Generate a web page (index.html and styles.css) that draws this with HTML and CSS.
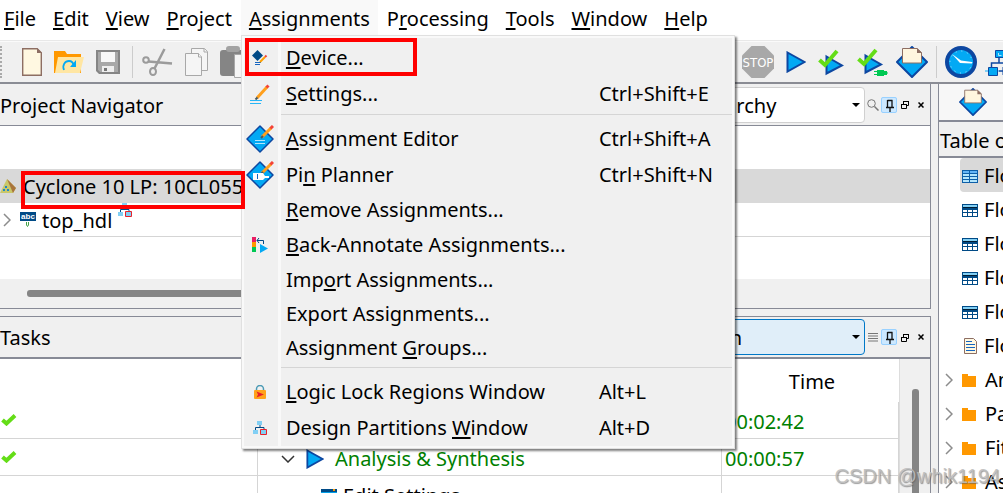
FILE: index.html
```
<!DOCTYPE html>
<html lang="en">
<head>
    <meta charset="UTF-8">
    <meta name="viewport" content="width=device-width, initial-scale=1.0">
    <title>Quartus Prime</title>
    <link rel="stylesheet" href="styles.css">
</head>
<body>
    <!-- shared icons -->
    <svg class="defs" width="0" height="0">
        <symbol id="play" viewBox="0 0 20 22"><path d="M1.500 1.500L18.500 11L1.500 20.500z" fill="#03a9f4" stroke="#0d47a1" stroke-width="2"/></symbol>
        <symbol id="paper-diamond" viewBox="0 0 32 32">
            <path d="M16 1L31 16L16 31L1 16z" fill="#03a9f4" stroke="#0d47a1" stroke-width="2" stroke-linejoin="round"/>
            <path d="M6.500 2.500H21l4.500 4V17h-19z" fill="#fff6df" stroke="#8d6e63"/><path d="M21 2v5h5z" fill="#8d6e63"/>
        </symbol>
        <symbol id="edit-diamond" viewBox="0 0 28 28">
            <path d="M14 1L27 14L14 27L1 14z" fill="#03a9f4" stroke="#0d47a1" stroke-width="1.500" stroke-linejoin="round"/>
            <path d="M16 12L25 3" stroke="#ff9f1c" stroke-width="3"/><path d="M24.500 3.500L27 1" stroke="#f44336" stroke-width="3"/><path d="M15 13l2-2" stroke="#455a64" stroke-width="2"/>
        </symbol>
        <symbol id="table" viewBox="0 0 16 13">
            <path d="M0 0h16v13H0z" fill="#004a86"/><path d="M1 1h14v2H1z" fill="#81cff4"/><path d="M1 3h14v1H1z" fill="#001c33"/>
            <path d="M1 6h4v2H1zM6 6h4v2H6zM11 6h4v2h-4zM1 9h4v3H1zM6 9h4v3H6zM11 9h4v3h-4z" fill="#fff"/>
        </symbol>
        <symbol id="folder" viewBox="0 0 14 13"><path d="M0 0h6v2h8v11H0z" fill="#ff9800"/></symbol>
        <symbol id="chevron" viewBox="0 0 8 14"><path d="M1 1l6 6-6 6" fill="none" stroke="#8c8c8c" stroke-width="1.500"/></symbol>
        <symbol id="tick" viewBox="0 0 16 12"><path d="M1.500 6l4 3.500L14 1.500" fill="none" stroke="#64dd17" stroke-width="4"/></symbol>
        <symbol id="partition" viewBox="0 0 14 14">
            <path d="M7 4v3M2.500 10V6.500H11V10" fill="none" stroke="#004a86"/><path d="M4 0h5v4H4zM0 9h5v4H0z" fill="#81cff4"/><path d="M7.500 8.500h6v5h-6z" fill="#81cff4" stroke="#e8202a"/>
        </symbol>
        <symbol id="pin" viewBox="0 0 16 16"><path d="M6.500 3v7M5 10.500h8M6.500 3.500h5M11 3v7M9 11v4" fill="none" stroke="#111" stroke-width="1.300"/></symbol>
        <symbol id="float" viewBox="0 0 8 9"><path d="M.5 4.500h5v4h-5zM2.500 4V1.500h5v4H6M2 1.500h6M0 4.500h6" fill="none" stroke="#000"/></symbol>
        <symbol id="close" viewBox="0 0 6 6"><path d="M.5.5l5 5M5.500.5l-5 5" stroke="#000" stroke-width="1.500"/></symbol>
    </svg>

    <nav class="menubar">
        <div class="menu"><button><u>F</u>ile</button></div>
        <div class="menu"><button><u>E</u>dit</button></div>
        <div class="menu"><button><u>V</u>iew</button></div>
        <div class="menu"><button><u>P</u>roject</button></div>
        <div class="menu open">
            <button><u>A</u>ssignments</button>
            <div class="dropdown">
                <button class="item with-icon marked">
                    <span class="icon"><svg width="16" height="16" viewBox="0 0 16 16"><path d="M5.500 0l5.500 5.500L5.500 11 0 5.500z" fill="#004a86"/><path d="M3 12.500h6M3 14.500h5" stroke="#1565c0"/><path d="M8 12l5-5" stroke="#ffa000" stroke-width="2"/><path d="M13 7l1.500-1.500" stroke="#f44336" stroke-width="2"/></svg></span>
                    <span><u>D</u>evice...</span>
                </button>
                <button class="item with-icon">
                    <span class="icon"><svg width="20" height="20" viewBox="0 0 20 20"><path d="M7 14L17 3" stroke="#ff9f1c" stroke-width="3"/><path d="M16.500 3.500l2-2" stroke="#f44336" stroke-width="3"/><path d="M5.500 15.500l2-2" stroke="#455a64" stroke-width="2"/><path d="M0 16.500h12M0 19.500h11" stroke="#29b6f6"/></svg></span>
                    <span><u>S</u>ettings...</span><span>Ctrl+Shift+E</span>
                </button>
                <hr>
                <button class="item with-icon">
                    <span class="icon"><svg width="28" height="28"><use href="#edit-diamond"/><path d="M9 15.500h10M9 18.500h10" stroke="#b3e5fc"/></svg></span>
                    <span><u>A</u>ssignment Editor</span><span>Ctrl+Shift+A</span>
                </button>
                <button class="item with-icon">
                    <span class="icon"><svg width="28" height="28"><use href="#edit-diamond"/><path d="M7 12h10l2 3h4v2h-4l-2 2H7z" fill="#fff"/><path d="M11.500 13v5" stroke="#1565c0"/></svg></span>
                    <span>Pi<u>n</u> Planner</span><span>Ctrl+Shift+N</span>
                </button>
                <button class="item"><span class="icon"></span><span><u>R</u>emove Assignments...</span></button>
                <button class="item with-icon">
                    <span class="icon"><svg width="16" height="16" viewBox="0 0 16 16"><path d="M0 0h4v5H0z" fill="#e91e63"/><path d="M0 5h4v5H0z" fill="#ff9800"/><path d="M0 10h4v5H0z" fill="#00c853"/><path d="M5 3.500h6.500V7M7 1L5 3.500 7 6" fill="none" stroke="#004a86"/><path d="M8 7l8 4.500L8 16z" fill="#03a9f4"/></svg></span>
                    <span><u>B</u>ack-Annotate Assignments...</span>
                </button>
                <button class="item"><span class="icon"></span><span>Imp<u>o</u>rt Assignments...</span></button>
                <button class="item"><span class="icon"></span><span>Export Assignments...</span></button>
                <button class="item"><span class="icon"></span><span>Assignment <u>G</u>roups...</span></button>
                <hr>
                <button class="item with-icon">
                    <span class="icon"><svg width="12" height="15" viewBox="0 0 12 15"><path d="M2.500 6V4a3.500 3.500 0 0 1 7 0v2" fill="none" stroke="#4b9ab5" stroke-width="1.500"/><rect y="5" width="12" height="9" rx="1" fill="#ffa31a"/><path d="M2.500 6.500l7.500 3-7.500 3 1.500-3z" fill="#e8202a"/></svg></span>
                    <span><u>L</u>ogic Lock Regions Window</span><span>Alt+L</span>
                </button>
                <button class="item with-icon">
                    <span class="icon"><svg width="14" height="14"><use href="#partition"/></svg></span>
                    <span>Design Partitions <u>W</u>indow</span><span>Alt+D</span>
                </button>
            </div>
        </div>
        <div class="menu"><button>P<u>r</u>ocessing</button></div>
        <div class="menu"><button><u>T</u>ools</button></div>
        <div class="menu"><button><u>W</u>indow</button></div>
        <div class="menu"><button><u>H</u>elp</button></div>
    </nav>

    <div class="toolbar">
        <span class="grip"></span>
        <div class="tools file-tools">
            <button aria-label="New"><svg width="20" height="28" viewBox="0 0 20 28"><path d="M.7.7h14.500l4.100 4V27.300H.7z" fill="#fff8e1" stroke="#8d6e63" stroke-width="1.400"/><path d="M15 0v5h5z" fill="#8d6e63"/></svg></button>
            <button aria-label="Open"><svg width="30" height="22" viewBox="0 0 30 22"><path d="M0 0h11l2 3h14v19H0z" fill="#ff9800"/><path d="M4 6h26l-4 16H1z" fill="#ffe6a3"/><path d="M10 19c-2-5 1-9 5-9q4 0 5 5" fill="none" stroke="#03a9f4" stroke-width="1.800"/><path d="M16 16h6V9z" fill="#03a9f4"/></svg></button>
            <button aria-label="Save"><svg width="24" height="24" viewBox="0 0 24 24"><path d="M0 0h24v24H3l-3-3z" fill="#858585"/><path d="M1.500 1.500h21v21H4l-2.500-2.500z" fill="#a8a8a8" stroke="#858585"/><path d="M5 2h14v10H5z" fill="#f7f7f7"/><path d="M6 16h12v6H6z" fill="#eee"/><path d="M8 18h3v3H8z" fill="#777"/></svg></button>
            <span class="divider"></span>
        </div>
        <div class="tools edit-tools">
            <button aria-label="Cut"><svg width="31" height="28" viewBox="0 0 31 28" fill="none" stroke="#9b9b9b"><circle cx="4" cy="12" r="2.800" stroke-width="2"/><ellipse cx="11" cy="23.500" rx="3" ry="3.500" stroke-width="2"/><path d="M6.500 13.500L30 15.500M12.500 20.500L22.500 1" stroke-width="2.500"/></svg></button>
            <button aria-label="Copy"><svg width="23" height="28" viewBox="0 0 23 28" fill="#f5f5f5" stroke="#a8a8a8"><path d="M6.500.5h13l3 3v19h-16z"/><path d="M.5 5.500h13l3 3v19H.5z"/><path d="M13.500 5.500v3.500h3.500M19 .5v3.500h3.500"/></svg></button>
            <button aria-label="Paste"><svg width="30" height="32" viewBox="0 0 30 32"><rect y="4" width="26" height="26" rx="3" fill="#858585"/><rect x="6" width="14" height="6" rx="3" fill="#a3a3a3"/><path d="M14.500 8.500h14v23h-14z" fill="#f5f5f5" stroke="#a8a8a8"/></svg></button>
        </div>
        <div class="tools start-tools">
            <button aria-label="Stop"><svg width="32" height="32" viewBox="0 0 32 32"><path d="M9.500 0h13L32 9.500v13L22.500 32h-13L0 22.500v-13z" fill="#a8a8a8"/><text x="16" y="21" text-anchor="middle" class="stop-text">STOP</text></svg></button>
            <button aria-label="Start compilation"><svg width="20" height="22"><use href="#play"/></svg></button>
            <button aria-label="Analyze"><svg width="26" height="27" viewBox="0 0 26 27"><path d="M8.500 7.500L24 16.500l-15.500 8z" fill="#03a9f4" stroke="#0d47a1" stroke-width="2"/><path d="M1.500 11l5.500 5L19 2" fill="none" stroke="#64dd17" stroke-width="4"/></svg></button>
            <button aria-label="Analyze and elaborate"><svg width="32" height="29" viewBox="0 0 32 29"><path d="M9.500 7.500L25 16.500l-15.500 8z" fill="#03a9f4" stroke="#0d47a1" stroke-width="2"/><path d="M2.500 11l5.500 5L20 2" fill="none" stroke="#64dd17" stroke-width="4"/><path d="M21 22h7v1h3v4h-3v1h-7z" fill="#00c853"/><path d="M18 23.500h4M18 26.500h4M30 25h2" stroke="#00c853"/></svg></button>
        </div>
        <div class="tools report-tools">
            <button aria-label="Compilation report"><svg width="32" height="32"><use href="#paper-diamond"/></svg></button>
            <span class="divider"></span>
            <button aria-label="Timing analyzer"><svg width="32" height="32" viewBox="0 0 32 32"><circle cx="16" cy="16" r="14" fill="#03a9f4" stroke="#0d47a1" stroke-width="4"/><circle cx="16" cy="16" r="11" fill="none" stroke="#b3e5fc" stroke-dasharray="1 4.760"/><path d="M7 8l9 6.500 11 1.500v1.500l-12-.5z" fill="#fff"/></svg></button>
            <button aria-label="Netlist viewer"><svg width="18" height="27" viewBox="0 0 18 27"><path d="M14 8v6M6.500 18v-4H18M0 22h18" fill="none" stroke="#0d47a1" stroke-width="1.500"/><path d="M0 22h3M12 22h2" stroke="#81cff4" stroke-width="2"/><path d="M10.500 1.500h9v7h-9zM3.500 18.500h9v8h-9zM18 18h2v8h-2z" fill="#03a9f4" stroke="#0d47a1"/><path d="M13.500 4v2.500h3" fill="none" stroke="#b3e5fc"/></svg></button>
        </div>
    </div>

    <main class="workspace">
        <div class="left">
            <section class="panel navigator">
                <header class="panel-head">
                    <h2>Project Navigator</h2>
                    <span class="select-wrap"><select class="hierarchy" aria-label="View"><option>Hierarchy</option></select></span>
                    <button aria-label="Search"><svg width="12" height="12" viewBox="0 0 12 12" fill="none" stroke="#777"><circle cx="4.500" cy="4.500" r="3.800"/><path d="M7.500 7.500l4 4" stroke-width="1.500"/></svg></button>
                    <button class="pin" aria-label="Pin"><svg width="16" height="16"><use href="#pin"/></svg></button>
                    <button aria-label="Float"><svg width="8" height="9"><use href="#float"/></svg></button>
                    <button aria-label="Close"><svg width="6" height="6"><use href="#close"/></svg></button>
                </header>
                <div class="tree">
                    <div class="tree-row selected">
                        <svg width="16" height="14" viewBox="0 0 16 14"><path d="M7 0l9 9-3 5H0z" fill="#c9c76a"/><path d="M7 0l9 9-3 5z" fill="#a9743c"/><path d="M5 7h2v2H5zM3 10h2v2H3zM7 10h2v2H7z" fill="#1e88c8"/></svg>
                        <span>Cyclone 10 LP: 10CL055</span>
                        <span class="mark"></span>
                    </div>
                    <div class="tree-row entity">
                        <svg class="arrow" width="8" height="14"><use href="#chevron"/></svg>
                        <svg width="16" height="15" viewBox="0 0 16 15"><path d="M0 0h16v9H0z" fill="#004a86"/><text x="8" y="7" text-anchor="middle" class="abc-text">abc</text><path d="M6.500 10v3l1 1.500 1-1.500v-3" fill="none" stroke="#43a047"/></svg>
                        <span>top_hdl</span>
                        <svg class="part" width="14" height="14"><use href="#partition"/></svg>
                    </div>
                </div>
                <div class="hscroll"><span></span></div>
            </section>

            <section class="panel tasks">
                <header class="panel-head">
                    <h2>Tasks</h2>
                    <span class="select-wrap"><select class="flow" aria-label="Flow"><option>Compilation</option></select></span>
                    <button aria-label="Menu"><svg width="10" height="10" viewBox="0 0 10 10"><path d="M0 1.500h10M0 4h10M0 6.500h10M0 9h10" stroke="#777"/></svg></button>
                    <button class="pin" aria-label="Pin"><svg width="16" height="16"><use href="#pin"/></svg></button>
                    <button aria-label="Float"><svg width="8" height="9"><use href="#float"/></svg></button>
                    <button aria-label="Close"><svg width="6" height="6"><use href="#close"/></svg></button>
                </header>
                <div class="task-body">
                    <table>
                        <colgroup><col class="c-status"><col><col class="c-time"></colgroup>
                        <thead><tr><th></th><th></th><th>Time</th></tr></thead>
                        <tbody>
                            <tr><td><svg width="16" height="12"><use href="#tick"/></svg></td><td></td><td>00:02:42</td></tr>
                            <tr>
                                <td><svg width="16" height="12"><use href="#tick"/></svg></td>
                                <td><div class="task level-1"><svg width="14" height="8" viewBox="0 0 14 8"><path d="M1 1l6 6 6-6" fill="none" stroke="#333" stroke-width="1.500"/></svg><svg width="18" height="20"><use href="#play"/></svg>Analysis &amp; Synthesis</div></td>
                                <td>00:00:57</td>
                            </tr>
                            <tr>
                                <td></td>
                                <td><div class="task level-2"><svg width="16" height="14" viewBox="0 0 16 14"><path d="M0 0h16v14H0z" fill="#03a0e8"/><path d="M0 0h16v3H0z" fill="#004a86"/><path d="M12 0h2v2h-2z" fill="#ff9800"/></svg>Edit Settings</div></td>
                                <td></td>
                            </tr>
                        </tbody>
                    </table>
                    <div class="vscroll"><span></span></div>
                </div>
            </section>
        </div>

        <aside class="report">
            <div class="tab"><svg width="28" height="28"><use href="#paper-diamond"/></svg></div>
            <h2>Table of Contents</h2>
            <ul>
                <li class="selected"><svg width="16" height="13" viewBox="0 0 16 13"><path d="M0 0h16v13H0z" fill="#0d5fa8"/><path d="M1 1h6v2H1zM8 1h7v2H8z" fill="#64b5f6"/><path d="M1 4h6v2H1zM8 4h7v2H8zM1 7h6v2H1zM8 7h7v2H8zM1 10h6v2H1zM8 10h7v2H8z" fill="#b3e5fc"/></svg>Flow Summary</li>
                <li><svg width="16" height="13"><use href="#table"/></svg>Flow Settings</li>
                <li><svg width="16" height="13"><use href="#table"/></svg>Flow Non-Default Global Settings</li>
                <li><svg width="16" height="13"><use href="#table"/></svg>Flow Elapsed Time</li>
                <li><svg width="16" height="13"><use href="#table"/></svg>Flow OS Summary</li>
                <li><svg width="16" height="16" viewBox="0 0 16 16"><path d="M2.500.5h9l3 3v12h-12z" fill="#fff8e1" stroke="#8d6e63"/><path d="M4 3.500h6M4 6.500h9M4 9.500h9M4 12.500h9" stroke="#1565c0"/></svg>Flow Log</li>
                <li class="branch"><svg width="8" height="14"><use href="#chevron"/></svg><svg width="16" height="13"><use href="#folder"/></svg>Analysis &amp; Synthesis</li>
                <li class="branch"><svg width="8" height="14"><use href="#chevron"/></svg><svg width="16" height="13"><use href="#folder"/></svg>Partition Merge</li>
                <li class="branch"><svg width="8" height="14"><use href="#chevron"/></svg><svg width="16" height="13"><use href="#folder"/></svg>Fitter</li>
                <li class="branch"><svg width="8" height="14"><use href="#chevron"/></svg><svg width="16" height="13"><use href="#folder"/></svg>Assembler</li>
            </ul>
        </aside>
    </main>
    <div class="watermark">CSDN @whik1194</div>
</body>
</html>
```
FILE: styles.css
```
* {
    box-sizing: border-box;
}
body {
    margin: 0;
    height: 100vh;
    overflow: hidden;
    position: relative;
    display: flex;
    flex-direction: column;
    background: #f0f0f0;
    color: #000;
    font-family: "Noto Sans", sans-serif;
    font-size: 20px;
    line-height: 28px;
    white-space: nowrap;
}
button {
    padding: 0;
    border: 0;
    background: none;
    color: inherit;
    font: inherit;
}
svg {
    display: block;
    flex: none;
}
.defs {
    position: absolute;
}
u {
    text-decoration-thickness: 2px;
    text-underline-offset: 2px;
    text-decoration-skip-ink: none;
}
h2 {
    margin: 0;
    font-size: 20px;
    font-weight: normal;
}

/* menu bar */
.menubar {
    display: flex;
    flex: none;
    gap: 1px;
    height: 41px;
    padding-right: 8px;
    padding-left: 4px;
    margin-left: -8px;
    background: #fff;
    border-bottom: 1px solid #e8e8e8;
}
.menu {
    position: relative;
    height: 36px;
}
.menu > button {
    height: 36px;
    padding: 2px 8px 0;
}
.menu.open {
    background: #f9f9f9;
}
.dropdown {
    position: absolute;
    z-index: 10;
    top: 35px;
    left: 0;
    width: 494px;
    padding: 4px 2px 2px;
    border: 1px solid #e0e0e0;
    background: #f9f9f9;
    background: linear-gradient(#f0f0f0, #f0f0f0) 2px 2px / 488px 10px no-repeat #f9f9f9;
    box-shadow: 2px 2px 2px rgba(0, 0, 0, 0.5);
}
.item {
    position: relative;
    display: grid;
    grid-template-columns: 42px 1fr 133px;
    align-items: center;
    width: 100%;
    height: 34px;
    background: #f0f0f0;
    text-align: left;
}
.item.with-icon {
    height: 36px;
}
.item .icon {
    display: flex;
    align-items: center;
    justify-content: center;
    width: 37px;
    height: 100%;
    padding-right: 2px;
    border-right: 3px solid #f9f9f9;
}
.dropdown hr {
    height: 9px;
    margin: 0;
    border: 0;
    background: linear-gradient(#d5d5d5, #d5d5d5) 37px 2px / 100% 1px no-repeat, linear-gradient(90deg, #f0f0f0 34px, #f9f9f9 34px 37px, #f0f0f0 37px);
}
.item.marked::after {
    content: "";
    position: absolute;
    z-index: 1;
    box-sizing: border-box;
    top: -2px;
    left: 1px;
    width: 172px;
    height: 38px;
    border: 4px solid #f00;
}

/* toolbar */
.toolbar {
    display: flex;
    flex: none;
    align-items: center;
    height: 43px;
    border-top: 1px solid #fafafa;
    border-bottom: 2px solid #8a8c94;
}
.grip {
    width: 2px;
    height: 32px;
    border-right: 2px dotted #aaa;
}
.tools {
    display: flex;
    align-items: center;
    gap: 12px;
}
.file-tools {
    margin-left: 20px;
}
.edit-tools {
    margin-left: 9px;
}
.start-tools {
    margin-left: auto;
}
.report-tools {
    gap: 8px;
    margin-left: 8px;
}
.divider {
    width: 1px;
    height: 32px;
    background: #ccc;
}
.stop-text {
    font: 14px "Liberation Sans Narrow", "DejaVu Sans Condensed", sans-serif;
    font-size: 13px;
    fill: #fff;
}
.abc-text {
    font: bold 8px "Liberation Sans", sans-serif;
    fill: #fff;
}

/* docked panels */
.workspace {
    display: grid;
    grid-template-columns: minmax(0, 1fr) 65px;
    gap: 7px;
    flex: 1;
    min-height: 0;
}
.left {
    display: flex;
    flex-direction: column;
    gap: 7px;
    min-height: 0;
}
.panel {
    border-right: 1px solid #878a96;
}
.navigator {
    border-bottom: 1px solid #878a96;
}
.panel-head {
    display: flex;
    align-items: center;
    height: 42px;
    padding-right: 1px;
    border-bottom: 1px solid #878a96;
}
.panel-head h2 {
    flex: 1;
    padding-top: 2px;
}
.select-wrap {
    position: relative;
    display: flex;
}
.select-wrap::after {
    content: "";
    position: absolute;
    right: 5px;
    top: 16px;
    border: 4px solid transparent;
    border-top-color: #000;
    border-bottom: 0;
}
select {
    appearance: none;
    height: 36px;
    padding: 2px 8px 0;
    border: 1px solid #d0d0d0;
    border-radius: 4px;
    background: #fff;
    color: #000;
    font: inherit;
}
.hierarchy {
    width: 188px;
}
.flow {
    width: 246px;
    border-color: #0078c8;
    background: #e0eef9;
}
.panel-head button {
    display: flex;
    align-items: center;
    justify-content: center;
    width: 16px;
    height: 16px;
}
.panel-head .pin {
    border-radius: 2px;
    outline: 1px solid #99d1ff;
    outline-offset: -1px;
    background: #cce8ff;
}
.tree {
    height: 153px;
    padding-top: 43px;
    background: #fff;
}
.tree-row {
    position: relative;
    display: flex;
    align-items: center;
    height: 34px;
}
.tree-row > span {
    padding-top: 2px;
}
.tree-row.selected {
    gap: 7px;
    background: #d9d9d9;
}
.mark {
    position: absolute;
    z-index: 20;
    top: 2px;
    left: 21px;
    width: 224px;
    height: 38px;
    border: 4px solid #f00;
}
.entity {
    gap: 6px;
    padding-left: 3px;
    border-bottom: 1px solid #d5d5d5;
}
.entity .arrow {
    margin-right: 3px;
}
.entity .part {
    align-self: flex-start;
}
.hscroll {
    height: 29px;
    padding: 11px 30px 0 27px;
}
.hscroll span {
    display: block;
    height: 7px;
    width: 75%;
    border-radius: 3px;
    background: #858585;
}

/* tasks */
.tasks {
    display: flex;
    flex-direction: column;
    flex: 1;
    min-height: 0;
    border-top: 1px solid #878a96;
}
.tasks .panel-head {
    flex: none;
    border-bottom-width: 2px;
}
.task-body {
    display: flex;
    flex: 1;
    min-height: 0;
    overflow: hidden;
    background: #fff;
}
table {
    flex: 1;
    align-self: flex-start;
    table-layout: fixed;
    border-collapse: separate;
    border-spacing: 0;
    color: #008000;
}
.c-status {
    width: 258px;
}
.c-time {
    width: 177px;
}
th {
    height: 43px;
    padding: 3px 0 0 3px;
    color: #000;
    font-weight: normal;
}
td {
    height: 37px;
    padding: 4px 3px 0;
    border-right: 1px solid #d5d5d5;
    border-bottom: 1px solid #d5d5d5;
}
td:first-child {
    padding: 0 0 0 1px;
}
.task {
    display: flex;
    align-items: center;
    gap: 11px;
}
.level-1 {
    padding-left: 20px;
}
.level-2 {
    gap: 6px;
    padding-left: 60px;
    color: #000;
}
.vscroll {
    width: 31px;
    padding: 30px 11px 0 12px;
    border-left: 1px solid #ddd;
    background: #f0f0f0;
}
.vscroll span {
    display: block;
    width: 7px;
    height: 100%;
    border-radius: 3px 3px 0 0;
    background: #858585;
}

/* compilation report */
.report {
    overflow: hidden;
    border-left: 1px solid #878a96;
    background: #fff;
}
.tab {
    height: 38px;
    padding: 4px 20px;
    border-bottom: 2px solid #878a96;
    background: #f7f7f7;
}
.report h2 {
    height: 36px;
    padding: 5px 1px 0;
    border-bottom: 2px solid #878a96;
    background: #f0f0f0;
}
.report ul {
    margin: 0;
    padding: 0;
    list-style: none;
}
.report li {
    display: flex;
    align-items: center;
    gap: 6px;
    height: 34px;
    margin-left: 21px;
    padding: 2px 0 0 2px;
}
.report .selected {
    border-radius: 4px 0 0 4px;
    background: #d9d9d9;
}
.report .branch {
    gap: 8px;
    margin-left: 4px;
}

.watermark {
    position: absolute;
    z-index: 30;
    right: 3px;
    bottom: 3px;
    color: rgba(190, 190, 190, 0.9);
    font-family: "Liberation Sans", sans-serif;
    font-size: 20px;
    text-shadow: 1px 1px 1px rgba(90, 90, 90, 0.6);
}
```
